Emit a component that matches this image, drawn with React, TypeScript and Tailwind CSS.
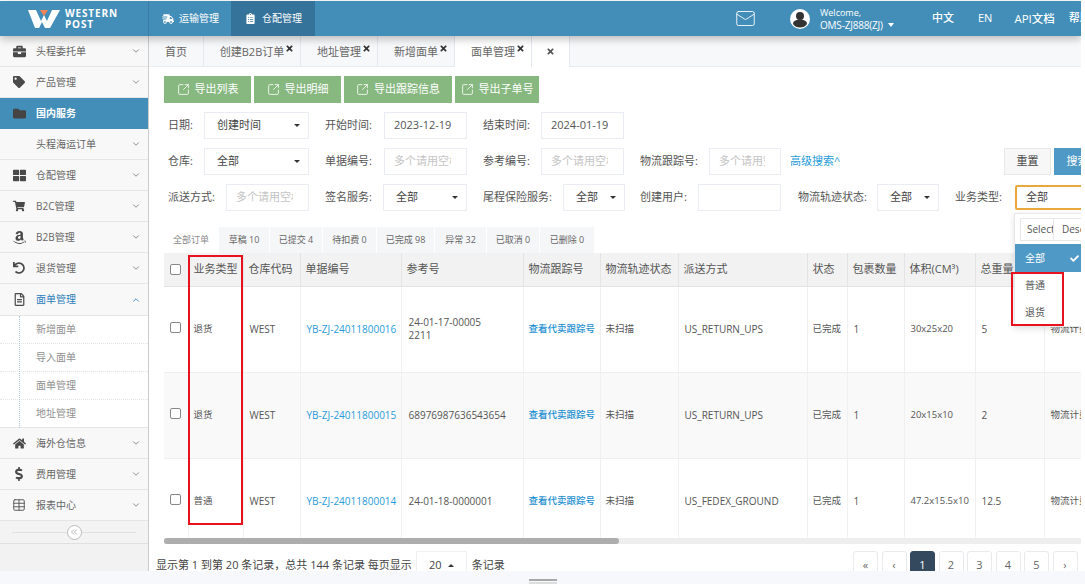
import { ChevronDown, ChevronUp, ChevronsLeft, Mail, SquareArrowOutUpRight, Table } from 'lucide-react'
import {
  FaAmazon,
  FaBriefcase,
  FaCheck,
  FaClipboardList,
  FaDollarSign,
  FaFolder,
  FaHome,
  FaRegFileAlt,
  FaShippingFast,
  FaShoppingCart,
  FaTag,
  FaThLarge,
  FaTimes,
  FaUndo,
} from 'react-icons/fa'

const font = "font-['Open_Sans','Noto_Sans_CJK_SC',sans-serif]"

const sideTop = [
  { label: '头程委托单', icon: <FaBriefcase size={13} /> },
  { label: '产品管理', icon: <FaTag size={12} /> },
]
const sideMid = [
  { label: '仓配管理', icon: <FaThLarge size={13} /> },
  { label: 'B2C管理', icon: <FaShoppingCart size={12} /> },
  { label: 'B2B管理', icon: <FaAmazon size={15} /> },
  { label: '退货管理', icon: <FaUndo size={12} /> },
]
const sideBottom = [
  { label: '海外仓信息', icon: <FaHome size={13} /> },
  { label: '费用管理', icon: <FaDollarSign size={14} /> },
  { label: '报表中心', icon: <Table size={14} strokeWidth={1.5} /> },
]
const subItems = ['新增面单', '导入面单', '面单管理', '地址管理']

const pageTabs = [
  { label: '首页', w: 'w-[55px]' },
  { label: '创建B2B订单', w: 'w-[97px]', close: true },
  { label: '地址管理', w: 'w-[77px]', close: true },
  { label: '新增面单', w: 'w-[77px]', close: true },
  { label: '面单管理', w: 'w-[77px]', close: true, active: true },
]

const statusTabs = [
  { label: '全部订单', w: 'w-[54px]', active: true },
  { label: '草稿 10', w: 'w-[50px]' },
  { label: '已提交 4', w: 'w-[52px]' },
  { label: '待扣费 0', w: 'w-[53px]' },
  { label: '已完成 98', w: 'w-[57px]' },
  { label: '异常 32', w: 'w-[51px]' },
  { label: '已取消 0', w: 'w-[52px]' },
  { label: '已删除 0', w: 'w-[54px]' },
]

const columns = [
  { label: '业务类型', w: 'w-[55px]' },
  { label: '仓库代码', w: 'w-[57px]' },
  { label: '单据编号', w: 'w-[101px]' },
  { label: '参考号', w: 'w-[122px]' },
  { label: '物流跟踪号', w: 'w-[77px]' },
  { label: '物流轨迹状态', w: 'w-[78px]' },
  { label: '派送方式', w: 'w-[129px]' },
  { label: '状态', w: 'w-[40px]' },
  { label: '包裹数量', w: 'w-[57px]' },
  { label: '体积(CM³)', w: 'w-[71px]' },
  { label: '总重量', w: 'w-[69px]' },
  { label: '', w: 'w-[60px]' },
]

const rows = [
  { type: '退货', no: 'YB-ZJ-24011800016', ref: ['24-01-17-00005', '2211'], ship: 'US_RETURN_UPS', size: '30x25x20', weight: '5' },
  { type: '退货', no: 'YB-ZJ-24011800015', ref: ['68976987636543654'], ship: 'US_RETURN_UPS', size: '20x15x10', weight: '2', alt: true },
  { type: '普通', no: 'YB-ZJ-24011800014', ref: ['24-01-18-0000001'], ship: 'US_FEDEX_GROUND', size: '47.2x15.5x10', weight: '12.5' },
]

function SideRow({ label, icon }: { label: string; icon: React.ReactNode }) {
  return (
    <div className="flex h-[31px] items-center border-b border-[#e5e5e5] bg-[#f8f8f8] text-[#666]">
      <span className="flex w-[36px] justify-center pl-[2px] text-[#4a4a4a]">{icon}</span>
      <span className="flex-1 text-[10px]">{label}</span>
      <ChevronDown size={10} className="mr-[7px] text-[#777]" />
    </div>
  )
}

function Field({ w, text, dark }: { w: string; text: string; dark?: boolean }) {
  return (
    <div className={`${w} flex h-[27px] shrink-0 items-center border border-[#e9edf3] bg-white pl-[9px] pr-[15px] text-[11px] ${dark ? 'text-[#555]' : 'text-[#c4c4c4]'}`}>
      <div className="w-full overflow-hidden whitespace-nowrap">{text}</div>
    </div>
  )
}

function Pick({ w, text }: { w: string; text: string }) {
  return (
    <div className={`${w} flex h-[27px] shrink-0 items-center justify-between border border-[#e9edf3] bg-white pl-[12px] pr-[8px] text-[11px] text-[#444]`}>
      {text}
      <span className="h-0 w-0 border-x-[3px] border-t-[3px] border-x-transparent border-t-[#333]" />
    </div>
  )
}

function Label({ w, text }: { w: string; text: string }) {
  return <span className={`${w} shrink-0 whitespace-nowrap text-[11px] text-[#555]`}>{text}</span>
}

export default function App() {
  return (
    <div className={`${font} relative h-[584px] w-[1085px] overflow-hidden bg-white`}>
      <div className="relative h-[571px] w-[1081px] overflow-hidden pt-px">
        {/* Header */}
        <div className="relative z-10 flex h-[35px] items-center bg-[#438eb9] text-white shadow-[0_3px_8px_rgba(0,0,0,0.25)]">
          <div className="flex h-full w-[149px] shrink-0 items-center justify-center gap-[5px] border-r border-[#3a7ea6] pr-[2px]">
            <svg width="32" height="18" viewBox="0 0 32 18">
              <path d="M0 0h8l5 11 3-6 3 6 5-11h8l-10 18h-5l-3-6-3 6h-4z" fill="#fff" />
              <path d="M12 0h8l-4 6z" fill="#ee8457" />
            </svg>
            <div className="text-[10px] font-bold leading-[11px] tracking-[0.9px]">
              WESTERN
              <br />
              POST
            </div>
          </div>
          <div className="flex h-[35px] w-[82px] shrink-0 items-center gap-[5px] pl-[13px] text-[10px]">
            <FaShippingFast size={12} />
            运输管理
          </div>
          <div className="flex h-[35px] w-[84px] shrink-0 items-center gap-[6px] bg-[#35739a] pl-[14px] text-[10px]">
            <FaClipboardList size={11} />
            仓配管理
          </div>
          <div className="ml-[420px] flex shrink-0 items-center whitespace-nowrap">
            <Mail size={21} strokeWidth={1} />
            <svg className="ml-[34px]" width="20" height="20" viewBox="0 0 20 20">
              <circle cx="10" cy="10" r="10" fill="#fff" />
              <circle cx="10" cy="7" r="4" fill="#333" />
              <path d="M3 15c0-3 3-4.500 7-4.500s7 1.500 7 4.500c-1.500 2.500-4 3.500-7 3.500s-5.500-1-7-3.500z" fill="#333" />
            </svg>
            <div className="ml-[10px] w-[78px] text-[9px] leading-[12px]">
              Welcome,
              <div className="flex items-center gap-[5px] text-[10px] tracking-[-0.2px]">
                OMS-ZJ888(ZJ)
                <span className="h-0 w-0 border-x-[3px] border-t-[4px] border-x-transparent border-t-white" />
              </div>
            </div>
            <span className="ml-[34px] text-[11px] font-medium">中文</span>
            <span className="ml-[24px] text-[11px] font-medium">EN</span>
            <span className="ml-[22px] text-[11.5px] font-medium">API文档</span>
            <span className="ml-[14px] text-[11px] font-medium">帮助</span>
          </div>
        </div>

        <div className="flex h-[535px]">
          {/* Sidebar */}
          <aside className="flex w-[149px] shrink-0 flex-col border-r border-[#cccccc] bg-[#f2f2f2]">
            {sideTop.map((s) => (
              <SideRow key={s.label} {...s} />
            ))}
            <div className="flex h-[31px] items-center bg-[#438eb9] text-white">
              <span className="flex w-[36px] justify-center pl-[2px] text-[#444]">
                <FaFolder size={13} />
              </span>
              <span className="text-[10px] font-semibold">国内服务</span>
            </div>
            <div className="flex h-[31px] items-center border-b border-[#e5e5e5] bg-[#f8f8f8] pl-[36px] text-[#666]">
              <span className="flex-1 text-[10px]">头程海运订单</span>
              <ChevronDown size={10} className="mr-[7px] text-[#777]" />
            </div>
            {sideMid.map((s) => (
              <SideRow key={s.label} {...s} />
            ))}
            <div className="flex h-[32px] items-center border-b border-[#e5e5e5] bg-[#f8f8f8]">
              <span className="flex w-[36px] justify-center pl-[2px] text-[#4a4a4a]">
                <FaRegFileAlt size={13} />
              </span>
              <span className="flex-1 text-[10px] text-[#2b7dbc]">面单管理</span>
              <ChevronUp size={10} className="mr-[7px] text-[#2b7dbc]" />
            </div>
            <div className="relative bg-white">
              <div className="absolute bottom-0 left-[19px] top-0 border-l border-dotted border-[#a9c9e2]" />
              {subItems.map((s, i) => (
                <div
                  key={s}
                  className={`flex h-[28px] items-center pl-[36px] text-[10px] text-[#8f8f8f] ${i < 3 ? 'border-b border-dotted border-[#e4e4e4]' : 'border-b border-[#e5e5e5]'}`}
                >
                  {s}
                </div>
              ))}
            </div>
            {sideBottom.map((s) => (
              <SideRow key={s.label} {...s} />
            ))}
            <div className="relative flex h-[23px] items-center justify-center border-b border-[#e0e0e0] bg-[#f3f3f3]">
              <div className="absolute left-[12px] right-[12px] top-[11px] border-t border-[#e0e0e0]" />
              <div className="relative flex h-[15px] w-[15px] items-center justify-center rounded-full border border-[#bbb] bg-white text-[#aaa]">
                <ChevronsLeft size={10} />
              </div>
            </div>
          </aside>

          {/* Main */}
          <main className="relative min-w-0 flex-1 overflow-hidden bg-white">
            <div className="flex h-[31px] border-b border-[#e8ebf0] bg-[#f7f8fa]">
              {pageTabs.map((t) => (
                <div
                  key={t.label}
                  className={`${t.w} relative flex shrink-0 items-center justify-center border-r border-[#e4e8ef] pt-[2px] text-[11px] text-[#666] ${t.active ? 'h-[31px] bg-white' : ''}`}
                >
                  {t.label}
                  {t.close && <FaTimes size={9} className="absolute right-[6px] top-[8px] text-[#333]" />}
                </div>
              ))}
              <div className="flex h-[31px] w-[38px] items-center justify-center border-r border-[#e4e8ef] bg-white text-[#555]">
                <FaTimes size={9} />
              </div>
            </div>

            <div className="ml-[15px] mt-[9px] flex gap-[3px]">
              {[
                ['导出列表', 'w-[87px]'],
                ['导出明细', 'w-[87px]'],
                ['导出跟踪信息', 'w-[108px]'],
                ['导出子单号', 'w-[84px]'],
              ].map(([label, w]) => (
                <button key={label} className={`${w} flex h-[27px] items-center justify-center gap-[5px] bg-[#87b87f] text-[11px] text-white`}>
                  <SquareArrowOutUpRight size={13} strokeWidth={1.5} />
                  {label}
                </button>
              ))}
            </div>

            {/* Filters */}
            <div className="ml-[19px] mt-[9px] flex h-[27px] items-center">
              <Label w="w-[36px]" text="日期:" />
              <Pick w="w-[105px]" text="创建时间" />
              <Label w="w-[59px] ml-[16px]" text="开始时间:" />
              <Field w="w-[83px]" text="2023-12-19" dark />
              <Label w="w-[58px] ml-[16px]" text="结束时间:" />
              <Field w="w-[83px]" text="2024-01-19" dark />
            </div>
            <div className="ml-[19px] mt-[9px] flex h-[27px] items-center">
              <Label w="w-[36px]" text="仓库:" />
              <Pick w="w-[105px]" text="全部" />
              <Label w="w-[59px] ml-[16px]" text="单据编号:" />
              <Field w="w-[83px]" text="多个请用空格" />
              <Label w="w-[58px] ml-[16px]" text="参考编号:" />
              <Field w="w-[83px]" text="多个请用空格" />
              <Label w="w-[69px] ml-[16px]" text="物流跟踪号:" />
              <Field w="w-[72px]" text="多个请用空" />
              <span className="ml-[9px] w-[214px] shrink-0 text-[11px] text-[#1e9bd8]">高级搜索^</span>
              <button className="h-[27px] w-[47px] shrink-0 border border-[#e8e8e8] bg-[#f7f7f7] text-[11px] text-[#444]">重置</button>
              <button className="ml-[3px] h-[27px] w-[47px] shrink-0 bg-[#4f99c6] text-[11px] text-white">搜索</button>
            </div>
            <div className="ml-[19px] mt-[9px] flex h-[27px] items-center">
              <Label w="w-[58px]" text="派送方式:" />
              <Field w="w-[83px]" text="多个请用空格" />
              <Label w="w-[58px] ml-[16px]" text="签名服务:" />
              <Pick w="w-[84px]" text="全部" />
              <Label w="w-[80px] ml-[16px]" text="尾程保险服务:" />
              <Pick w="w-[62px]" text="全部" />
              <Label w="w-[58px] ml-[15px]" text="创建用户:" />
              <Field w="w-[83px]" text="" />
              <Label w="w-[79px] ml-[17px]" text="物流轨迹状态:" />
              <Pick w="w-[62px]" text="全部" />
              <Label w="w-[60px] ml-[16px]" text="业务类型:" />
              <div className="flex h-[25px] w-[80px] shrink-0 items-center rounded-[2px] border-2 border-[#e8a83a] bg-white pl-[9px] text-[11px] text-[#444]">
                全部
              </div>
            </div>

            {/* Status tabs */}
            <div className="ml-[15px] mt-[16px] flex h-[26px] gap-px">
              {statusTabs.map((t) => (
                <div
                  key={t.label}
                  className={`${t.w} flex items-center justify-center whitespace-nowrap text-[9px] ${t.active ? 'bg-white text-[#888]' : 'bg-[#f5f6f8] text-[#666]'}`}
                >
                  {t.label}
                </div>
              ))}
            </div>

            {/* Table */}
            <div className="ml-[15px] overflow-hidden">
              <table className="w-[940px] table-fixed border-collapse text-[10px] text-[#555]">
                <thead>
                  <tr className="h-[33px] border-b border-[#e2e2e2] bg-[#f2f2f2]">
                    <th className="w-[24px] border-r border-[#e4e4e4] font-normal">
                      <span className="mx-auto block h-[11px] w-[11px] rounded-[2px] border border-[#888] bg-white" />
                    </th>
                    {columns.map((c, i) => (
                      <th key={i} className={`${c.w} whitespace-nowrap border-r border-[#e4e4e4] pl-[5px] text-left text-[11px] font-normal text-[#555]`}>
                        {c.label}
                      </th>
                    ))}
                  </tr>
                </thead>
                <tbody>
                  {rows.map((r) => (
                    <tr key={r.no} className={`h-[86px] border-b border-[#eee] ${r.alt ? 'bg-[#f9f9f9]' : 'bg-white'}`}>
                      <td className="border-r border-[#f0f0f0]">
                        <span className="mx-auto -mt-[3px] block h-[11px] w-[11px] rounded-[2px] border border-[#888] bg-white" />
                      </td>
                      <td className="border-r border-[#f0f0f0] pl-[5px] text-[9.5px]">{r.type}</td>
                      <td className="border-r border-[#f0f0f0] pl-[6px]">WEST</td>
                      <td className="whitespace-nowrap border-r border-[#f0f0f0] pl-[6px] text-[#2a9bd8]">{r.no}</td>
                      <td className="border-r border-[#f0f0f0] pl-[7px] leading-[13px]">
                        {r.ref.map((x) => (
                          <div key={x}>{x}</div>
                        ))}
                      </td>
                      <td className="whitespace-nowrap border-r border-[#f0f0f0] pl-[5px] text-[9.5px] font-medium text-[#1b8fd0]">查看代卖跟踪号</td>
                      <td className="border-r border-[#f0f0f0] pl-[5px] text-[9.5px]">未扫描</td>
                      <td className="border-r border-[#f0f0f0] pl-[6px]">{r.ship}</td>
                      <td className="border-r border-[#f0f0f0] pl-[5px] text-[9.5px]">已完成</td>
                      <td className="border-r border-[#f0f0f0] pl-[6px]">1</td>
                      <td className="whitespace-nowrap border-r border-[#f0f0f0] pl-[6px] text-[9.5px]">{r.size}</td>
                      <td className="border-r border-[#f0f0f0] pl-[6px]">{r.weight}</td>
                      <td className="overflow-hidden whitespace-nowrap pl-[6px] text-[9.5px]">物流计费</td>
                    </tr>
                  ))}
                </tbody>
              </table>
              <div className="relative -mt-[7px] h-[6px] bg-[#eeeeee]">
                <div className="h-[6px] w-[455px] rounded-[3px] bg-[#adadad]" />
              </div>
            </div>

            {/* Footer */}
            <div className="ml-[7px] mt-[7px] flex h-[30px] items-start text-[11px] text-[#444]">
              <div className="flex h-[30px] w-[697px] shrink-0 items-center whitespace-nowrap">
                显示第 1 到第 20 条记录，总共 144 条记录 每页显示
                <span className="ml-[4px] mr-[5px] flex h-[30px] w-[51px] items-center justify-center gap-[6px] border border-[#eef0f3]">
                  20
                  <span className="h-0 w-0 border-x-[3px] border-b-[3px] border-x-transparent border-b-[#333]" />
                </span>
                条记录
              </div>
              <div className="flex shrink-0 gap-[3.500px]">
                {['«', '‹', '1', '2', '3', '4', '5', '›', '»'].map((p) => (
                  <span
                    key={p}
                    className={`flex h-[30px] w-[25px] items-center justify-center rounded-[3px] border ${p === '1' ? 'border-[#34495e] bg-[#34495e] text-white' : 'border-[#e8eaee] text-[#666]'}`}
                  >
                    {p}
                  </span>
                ))}
              </div>
            </div>
          </main>
        </div>

        {/* Open dropdown */}
        <div className="absolute left-[1014px] top-[213px] z-20 h-[114px] w-[80px] border border-[#e8e8e8] bg-white text-[10px] text-[#555] shadow-[0_2px_6px_rgba(0,0,0,0.12)]">
          <div className="flex h-[30px] items-center pl-[5px]">
            <span className="flex h-[23px] w-[34px] items-center overflow-hidden border border-[#e8e8e8] pl-[6px]">Select</span>
            <span className="flex h-[23px] w-[34px] items-center overflow-hidden border border-l-0 border-[#e8e8e8] pl-[8px]">Deselect</span>
          </div>
          <div className="flex h-[28px] items-center justify-between bg-[#4f99c6] pl-[10px] pr-[14px] text-white">
            全部
            <FaCheck size={9} />
          </div>
          <div className="flex h-[27px] items-center pl-[10px]">普通</div>
          <div className="flex h-[27px] items-center pl-[10px]">退货</div>
        </div>

        {/* Red annotation boxes */}
        <div className="absolute left-[188px] top-[255px] z-30 h-[270px] w-[55px] border-2 border-[#e8121f]" />
        <div className="absolute left-[1011px] top-[272px] z-30 h-[54px] w-[53px] border-2 border-[#e8121f]" />
      </div>

      <div className="flex h-[13px] w-full flex-col items-center gap-px bg-[#f7f8fc] pt-[8px]">
        <div className="h-[2px] w-[28px] shrink-0 bg-[#a8a8a8]" />
        <div className="h-[2px] w-[28px] shrink-0 bg-[#dddddd]" />
      </div>
    </div>
  )
}
